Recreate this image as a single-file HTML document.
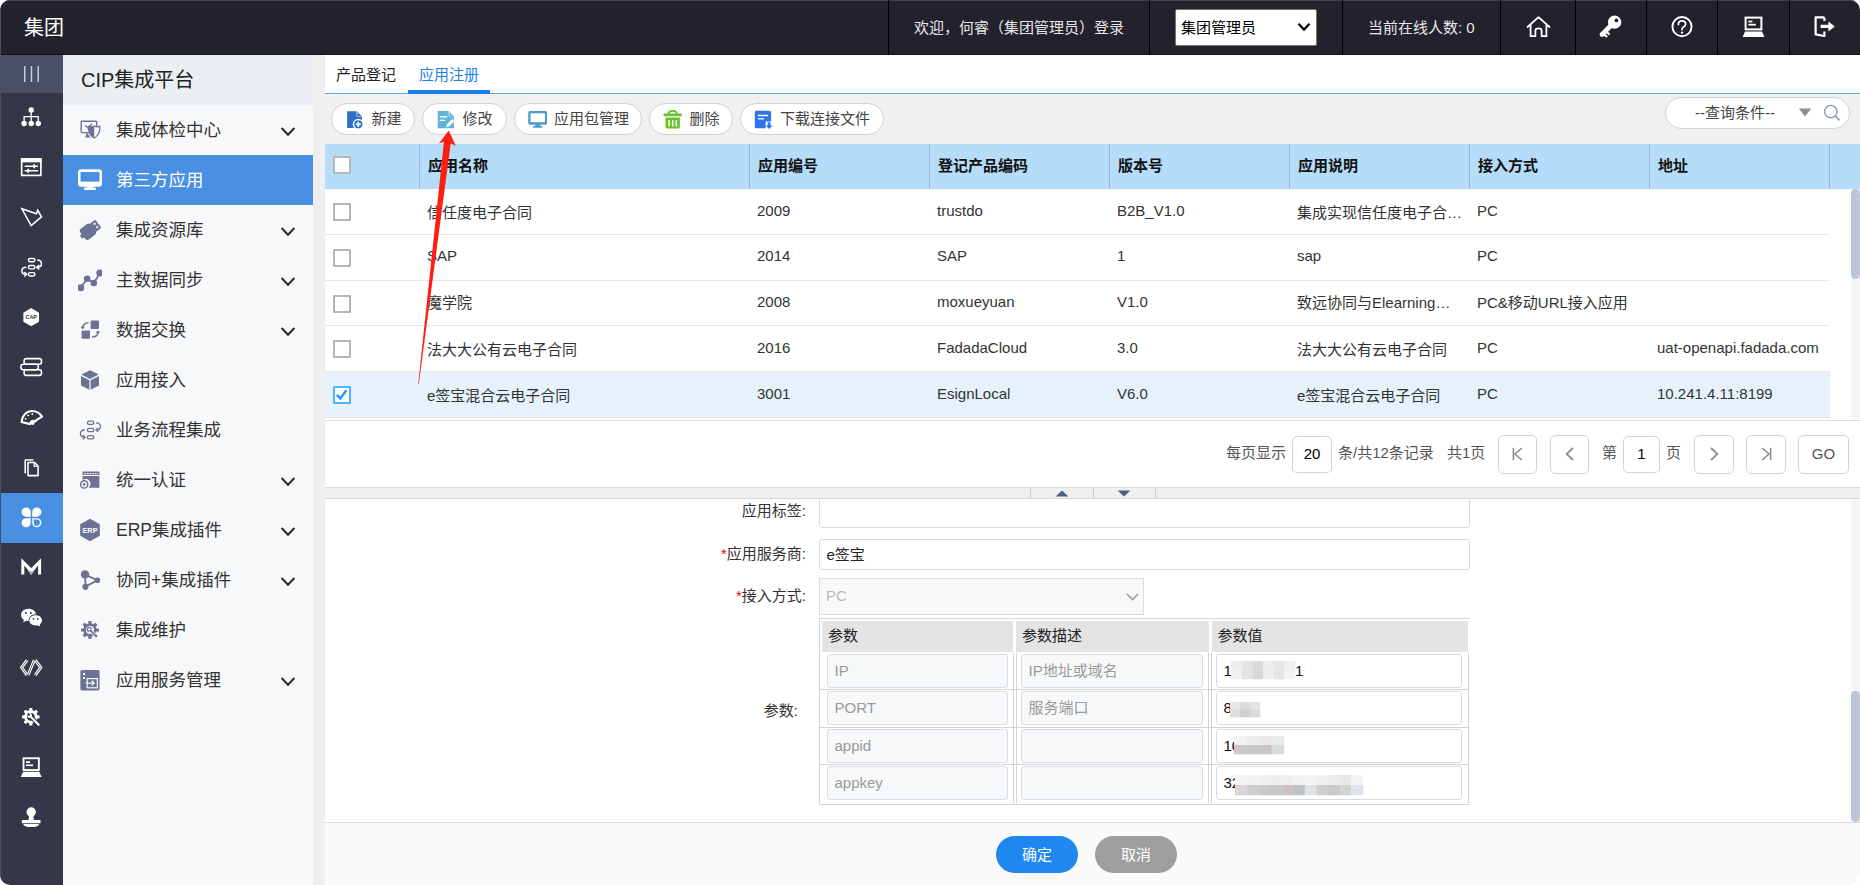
<!DOCTYPE html>
<html lang="zh-CN">
<head>
<meta charset="utf-8">
<title>CIP集成平台</title>
<style>
*{box-sizing:border-box;margin:0;padding:0}
html,body{width:1860px;height:885px;overflow:hidden;background:#fff}
body{font-family:"Liberation Sans","Noto Sans CJK SC",sans-serif;font-size:15px;color:#333;position:relative}
.abs{position:absolute}
#win{position:absolute;left:0;top:0;width:1860px;height:885px;border-radius:10px;overflow:hidden;background:#fff}
/* top bar */
#top{position:absolute;left:0;top:0;width:1860px;height:55px;background:#23212c;box-shadow:inset 0 1px 0 #44444f, inset 0 -1px 0 #14121d;color:#fff}
#top .logo{position:absolute;left:24px;top:14px;font-size:20px;line-height:28px;color:#fff}
#top .sep{position:absolute;top:0;width:1px;height:55px;background:#000}
#top .txt{position:absolute;top:0;height:55px;line-height:55px;font-size:15px;color:#e8e8ea;white-space:nowrap}
#top .sel{position:absolute;left:1175px;top:9px;width:142px;height:37px;background:#fff;border:1px solid #767676;border-radius:2px;color:#000;font-size:15px;line-height:35px;padding-left:5px}
#top svg.ic{position:absolute}
/* icon strip */
#strip{position:absolute;left:0;top:55px;width:63px;height:830px;background:#343747}
#strip .ham{position:absolute;left:0;top:0;width:63px;height:38px;background:#4a4f66}
#strip .cur{position:absolute;left:0;top:438px;width:63px;height:50px;background:#4a90e2}
#strip svg{position:absolute;left:20.4px;width:22.4px;height:22.4px}
/* menu */
#menu{position:absolute;left:63px;top:55px;width:250px;height:830px;background:#f7f8fa}
#menu .hd{height:50px;background:#ebeef3;font-size:20px;line-height:50px;padding-left:18px;color:#222}
#menu .it{position:relative;height:50px;line-height:50px;font-size:17.5px;color:#333;padding-left:53px;white-space:nowrap}
#menu .it.on{background:#4a90e2;color:#fff}
#menu .it svg.mi{position:absolute;left:15px;top:13px;width:24px;height:24px}
#menu .it svg.ch{position:absolute;left:216.500px;top:20.500px;width:16px;height:12px}
#gap{position:absolute;left:313px;top:55px;width:12px;height:830px;background:#efefef}
/* main */
#main{position:absolute;left:325px;top:55px;width:1535px;height:830px;background:#fff}
#tabs{position:absolute;left:0;top:0;width:1535px;height:39px;border-bottom:1px solid #5aa8f2}
#tabs span{position:absolute;top:10px;font-size:15px;line-height:20px;color:#222}
#tabs .on{color:#1f7fe8}
#tabs .ul{position:absolute;left:83px;top:35px;width:82px;height:4px;background:#1b7ee6}
#tool{position:absolute;left:0;top:39px;width:1535px;height:50px;background:#f0f0f0}
.btn{position:absolute;top:9px;height:32px;border:1px solid #d2d2d2;border-radius:16px;background:#fff;font-size:15px;line-height:30px;color:#444;white-space:nowrap;padding-left:39.6px}
.btn svg{position:absolute;left:13.3px;top:5.5px;width:19px;height:19px}
#q{position:absolute;left:1340px;top:3px;width:184.500px;height:32px;border:1px solid #d2d2d2;border-radius:16px;background:#fff;font-size:15px;line-height:30px;color:#444}
/* table */
#th{position:absolute;left:0;top:89px;width:1535px;height:45px;background:#b5dcf8}
#th .c{position:absolute;top:0;height:45px;line-height:43px;font-weight:bold;color:#111;font-size:15px;padding-left:8px;border-left:1px solid #9db1da}
.row{position:absolute;left:0;width:1505px;height:46px;border-bottom:1px solid #e8e8e8;background:#fff}
.row.sel{background:#e6f1fc}
.row span{position:absolute;top:0;height:43px;line-height:43px;font-size:15px;color:#333;white-space:nowrap}
.row span.z{top:1.5px}
.row.u span{top:-1.2px}
.row.u span.z{top:0.3px}
.cb{position:absolute;left:8px;width:18px;height:18px;border:2px solid #b6b6b6;border-radius:1px;background:#fff}
/* pager */
#pg{position:absolute;left:0;top:365px;width:1535px;height:67px;border-top:1px solid #ddd;background:#fff}
#pg .t{position:absolute;top:0;line-height:64px;font-size:15px;color:#555;white-space:nowrap}
#pg .b{position:absolute;border:1px solid #d4d4d4;border-radius:5px;background:#fff;text-align:center;color:#333}
#split{position:absolute;left:0;top:432px;width:1535px;height:12px;background:#f0f0f0;border-top:1px solid #d8d8d8;border-bottom:1px solid #d8d8d8}
/* form */
#form{position:absolute;left:0;top:444px;width:1535px;height:324px;background:#fff;overflow:hidden}
.lab{position:absolute;width:480px;text-align:right;font-size:15px;line-height:20px;color:#333;white-space:nowrap}
.lab i{color:#f00;font-style:normal}
.inp{position:absolute;border:1px solid #d7dbe3;border-radius:3px;background:#fff;font-size:15px;color:#222;padding-left:6.500px}
.dis{background:#f7f8fa;color:#9a9a9a}
#foot{position:absolute;left:0;top:767px;width:1535px;height:63px;background:#fafafa;border-top:1px solid #dcdcdc}
#foot .ok,#foot .no{position:absolute;top:13px;width:82px;height:37px;border-radius:19px;color:#fff;font-size:15px;line-height:37px;text-align:center}
#foot .ok{left:671px;background:#1f88f0}
#foot .no{left:770px;background:#9e9e9e}
</style>
</head>
<body>
<div id="win">
<!--TOP-->
<div id="top">
<div class="logo">集团</div>
<div class="sep" style="left:888px"></div><div class="sep" style="left:1149px"></div><div class="sep" style="left:1342px"></div><div class="sep" style="left:1500px"></div><div class="sep" style="left:1575px"></div><div class="sep" style="left:1646px"></div><div class="sep" style="left:1717px"></div><div class="sep" style="left:1789px"></div>
<div class="txt" style="left:914px">欢迎，何睿（集团管理员）登录</div>
<div class="sel">集团管理员<svg class="ic" style="left:121px;top:12px" width="14" height="10" viewBox="0 0 14 10"><path d="M1.5 1.8 L7 7.6 L12.5 1.8" fill="none" stroke="#000" stroke-width="2.2"/></svg></div>
<div class="txt" style="left:1368px">当前在线人数: 0</div>
<svg class="ic" style="left:1526px;top:15px" width="25" height="24" viewBox="0 0 25 24"><path d="M1.5 12 L12.5 2.2 L23.5 12 M4.6 10 V21.2 H9.4 V15.6 Q9.4 13.4 12.5 13.4 Q15.6 13.4 15.6 15.6 V21.2 H20.4 V10" fill="none" stroke="#fff" stroke-width="1.800" stroke-linejoin="round" stroke-linecap="round"/></svg>
<svg class="ic" style="left:1599px;top:14px" width="24" height="24" viewBox="0 0 24 24"><path d="M3 20.5 L12 11.5" stroke="#fff" stroke-width="4.6" stroke-linecap="round"/><path d="M5.5 20.8 l2 1.6 M8.3 18.6 l1.6 1.4" stroke="#fff" stroke-width="2.2" stroke-linecap="round"/><circle cx="15.6" cy="8.2" r="6.6" fill="#fff"/><circle cx="17.4" cy="6.4" r="1.9" fill="#23212c"/></svg>
<svg class="ic" style="left:1670px;top:15px" width="24" height="24" viewBox="0 0 24 24"><circle cx="12" cy="11.6" r="9.6" fill="none" stroke="#fff" stroke-width="1.9"/><path d="M8.4 9.4 Q8.4 5.8 12 5.8 Q15.6 5.8 15.6 9 Q15.6 10.8 13.6 12 Q12 13 12 14.6" fill="none" stroke="#fff" stroke-width="1.8" stroke-linecap="round"/><circle cx="12" cy="17.6" r="1.2" fill="#fff"/></svg>
<svg class="ic" style="left:1741px;top:14.500px" width="25" height="24" viewBox="0 0 25 24"><rect x="4.6" y="2.6" width="15.8" height="11.8" fill="none" stroke="#fff" stroke-width="2"/><rect x="7.4" y="5.6" width="4" height="1.8" fill="#fff"/><rect x="7.4" y="8.8" width="7.4" height="1.8" fill="#fff"/><path d="M4 16.6 H21 L23.4 22 H1.6 Z" fill="#fff"/></svg>
<svg class="ic" style="left:1813px;top:14px" width="24" height="24" viewBox="0 0 24 24"><path d="M11.4 3.4 H2.6 V20.4 L11.4 22 V17.6" fill="none" stroke="#fff" stroke-width="2.2" stroke-linejoin="round"/><path d="M11.4 3.4 V7" fill="none" stroke="#fff" stroke-width="2.2"/><path d="M7.600 10.800 H15.400 V7.400 L21.800 12.400 L15.400 17.400 V14 H7.600 Z" fill="#fff"/></svg>
</div>
<!--STRIP-->
<div id="strip"><div class="ham"><svg style="left:23px;top:11px;width:17px;height:16px" viewBox="0 0 17 16"><path d="M1.800 0 V16 M8.500 0 V16 M15.200 0 V16" stroke="#cfd3e0" stroke-width="1.400"/></svg></div><div class="cur"></div>
<svg style="top:51px" viewBox="0 0 24 24"><circle cx="12" cy="4.200" r="2.900" fill="#fff"/><path d="M12 5 V17 M4.400 17 V11.400 H19.600 V17" fill="none" stroke="#fff" stroke-width="1.400"/><circle cx="4.400" cy="18.800" r="2.900" fill="#fff"/><circle cx="12" cy="18.800" r="2.900" fill="#fff"/><circle cx="19.600" cy="18.800" r="2.900" fill="#fff"/></svg>
<svg style="top:101px" viewBox="0 0 24 24"><rect x="1.8" y="3.2" width="20.6" height="17.6" fill="none" stroke="#fff" stroke-width="1.8"/><rect x="1" y="2.4" width="22.2" height="4.4" fill="#fff"/><path d="M5 11 H19.4 M5 15.8 H19.4" stroke="#fff" stroke-width="1.5"/><path d="M15.2 8.8 V13.2 M8.8 13.6 V18" stroke="#fff" stroke-width="2"/></svg>
<svg style="top:151px" viewBox="0 0 24 24"><path d="M2 3 L17.6 8.4 L19 4.6 L23 11.6 L12 21 Z" fill="none" stroke="#fff" stroke-width="1.7" stroke-linejoin="miter"/></svg>
<svg style="top:201px" viewBox="0 0 24 24"><rect x="9" y="2.6" width="7" height="3.6" rx="1.8" fill="none" stroke="#fff" stroke-width="1.5"/><rect x="9" y="10.2" width="7" height="3.6" rx="1.8" fill="none" stroke="#fff" stroke-width="1.5"/><rect x="9" y="17.8" width="7" height="3.6" rx="1.8" fill="none" stroke="#fff" stroke-width="1.5"/><path d="M18.4 4.4 Q23 4.6 23 8.2 Q23 12 18.6 12" fill="none" stroke="#fff" stroke-width="1.6"/><path d="M20.6 9.6 L18 12 L20.6 14.4" fill="none" stroke="#fff" stroke-width="1.6"/><path d="M6.8 12 Q2 12.2 2 15.8 Q2 19.6 6.4 19.6" fill="none" stroke="#fff" stroke-width="1.6"/><path d="M4.6 17.2 L7.2 19.6 L4.6 22" fill="none" stroke="#fff" stroke-width="1.6"/></svg>
<svg style="top:251px" viewBox="0 0 24 24"><path d="M12 3.200 L19.600 7.600 V16.400 L12 20.800 L4.400 16.400 V7.600 Z" fill="#fff" stroke="#fff" stroke-width="1.600" stroke-linejoin="round"/><text x="12" y="14.100" text-anchor="middle" font-family="Liberation Sans, sans-serif" font-weight="bold" font-size="5.800" fill="#343747">CAP</text></svg>
<svg style="top:301px" viewBox="0 0 24 24"><rect x="4.400" y="2.800" width="18.600" height="6" rx="2.400" fill="none" stroke="#fff" stroke-width="1.700"/><rect x="1" y="8.800" width="18.600" height="6" rx="2.400" fill="none" stroke="#fff" stroke-width="1.700"/><rect x="4.400" y="14.800" width="18.600" height="6" rx="2.400" fill="none" stroke="#fff" stroke-width="1.700"/></svg>
<svg style="top:351px" viewBox="0 0 24 24"><path d="M1.6 17.2 Q3 6.4 12 5.4 Q19.6 5 23.6 11.4 L15.4 16.4 Q13.4 15 11.6 17.2 L11 19.4 Z" fill="none" stroke="#fff" stroke-width="2.300" stroke-linejoin="round"/><circle cx="6" cy="13.8" r="1" fill="#fff"/><circle cx="8.8" cy="10" r="1" fill="#fff"/><circle cx="13.2" cy="8.6" r="1" fill="#fff"/><circle cx="13.6" cy="18.6" r="1.7" fill="#fff"/><path d="M13.6 18.6 L18.4 15.2" stroke="#fff" stroke-width="1.5"/></svg>
<svg style="top:401px" viewBox="0 0 24 24"><path d="M8.600 7 H15.600 L19.400 10.800 V21 H8.600 Z" fill="none" stroke="#fff" stroke-width="1.700" stroke-linejoin="round"/><path d="M15.200 7.200 V11.200 H19.200" fill="none" stroke="#fff" stroke-width="1.400"/><path d="M5.600 18.400 V4.200 H14.400" fill="none" stroke="#fff" stroke-width="1.700" stroke-linejoin="round"/></svg>
<svg style="top:451px" viewBox="0 0 24 24"><path d="M6.6 1.6 A4.9 4.9 0 0 1 11.5 6.5 V11.4 H6.6 A4.9 4.9 0 0 1 6.6 1.6 Z" fill="#fff"/><path d="M18 1.6 A4.9 4.9 0 0 1 18 11.4 H13.1 V6.5 A4.9 4.9 0 0 1 18 1.6 Z" fill="#fff"/><path d="M6.6 13 H11.5 V17.9 A4.9 4.9 0 1 1 6.6 13 Z" fill="#fff"/><path d="M13.9 13.8 H18 A4.1 4.1 0 1 1 13.9 17.9 Z" fill="none" stroke="#fff" stroke-width="1.6"/></svg>
<svg style="top:501px" viewBox="0 0 24 24"><path d="M3 19.800 V6.400 L12 15.400 L21 6.400 V19.800" fill="none" stroke="#fff" stroke-width="3.200" stroke-linejoin="miter"/><path d="M3 6.400 L12 19.600 L21 6.400" fill="none" stroke="#fff" stroke-width="1"/></svg>
<svg style="top:551px" viewBox="0 0 24 24"><path d="M9.2 3 C4.4 3 1.2 6 1.2 9.6 C1.2 11.8 2.4 13.6 4.2 14.8 L3.4 17.6 L6.6 15.8 C7.4 16 8.2 16.2 9.2 16.2 C9.2 11 13 8.6 17.2 8.8 C16.6 5.400 13.400 3 9.2 3 Z" fill="#fff"/><path d="M16.800 9.8 C12.800 9.8 10 12.200 10 15.400 C10 18.600 12.800 21 16.800 21 C17.600 21 18.400 20.900 19.100 20.700 L21.800 22.200 L21.100 19.800 C22.700 18.700 23.600 17.200 23.600 15.400 C23.600 12.200 20.800 9.8 16.800 9.800 Z" fill="#fff"/><circle cx="6.400" cy="7.400" r="1.1" fill="#343747"/><circle cx="11.600" cy="7.400" r="1.1" fill="#343747"/><circle cx="14.400" cy="13.800" r="1" fill="#343747"/><circle cx="19" cy="13.800" r="1" fill="#343747"/></svg>
<svg style="top:601px" viewBox="0 0 24 24"><path d="M7.600 4.400 L1.800 12.400 L7.600 20.400 M16.400 4.400 L22.200 12.400 L16.400 20.400" fill="none" stroke="#fff" stroke-width="3.200" stroke-linejoin="miter"/><path d="M15.400 4.400 L8.600 20.400" fill="none" stroke="#fff" stroke-width="3.200"/><path d="M7.600 4.400 L1.800 12.400 L7.600 20.400 M16.400 4.400 L22.200 12.400 L16.400 20.400 M15.400 4.400 L8.600 20.400" fill="none" stroke="#343747" stroke-width="0.800"/></svg>
<svg style="top:651px" viewBox="0 0 24 24"><g transform="translate(11.600 11.600)"><rect x="-1.700" y="-9.400" width="3.400" height="4.600" rx="0.700" fill="#fff" transform="rotate(0)"/><rect x="-1.700" y="-9.400" width="3.400" height="4.600" rx="0.700" fill="#fff" transform="rotate(45)"/><rect x="-1.700" y="-9.400" width="3.400" height="4.600" rx="0.700" fill="#fff" transform="rotate(90)"/><rect x="-1.700" y="-9.400" width="3.400" height="4.600" rx="0.700" fill="#fff" transform="rotate(135)"/><rect x="-1.700" y="-9.400" width="3.400" height="4.600" rx="0.700" fill="#fff" transform="rotate(180)"/><rect x="-1.700" y="-9.400" width="3.400" height="4.600" rx="0.700" fill="#fff" transform="rotate(225)"/><rect x="-1.700" y="-9.400" width="3.400" height="4.600" rx="0.700" fill="#fff" transform="rotate(270)"/><rect x="-1.700" y="-9.400" width="3.400" height="4.600" rx="0.700" fill="#fff" transform="rotate(315)"/><circle r="5.700" fill="none" stroke="#fff" stroke-width="3"/></g><path d="M10 10 L19 19" stroke="#343747" stroke-width="4.400"/><path d="M11 11 L20 20" stroke="#fff" stroke-width="2.200" stroke-linecap="round"/><circle cx="10.200" cy="10.200" r="2.600" fill="#fff"/><circle cx="9.200" cy="9.200" r="1.400" fill="#343747"/></svg>
<svg style="top:701px" viewBox="0 0 24 24"><rect x="3.800" y="2.400" width="16.400" height="12.600" fill="none" stroke="#fff" stroke-width="2"/><rect x="6.400" y="5.600" width="4.400" height="1.900" fill="#fff"/><rect x="6.400" y="9" width="7.600" height="1.900" fill="#fff"/><path d="M3.400 17 H20.600 L23.200 22.400 H0.800 Z" fill="#fff"/></svg>
<svg style="top:751px" viewBox="0 0 24 24"><circle cx="12" cy="6.400" r="5" fill="#fff"/><path d="M9.800 10 H14.200 L15 15.400 H9 Z" fill="#fff"/><path d="M2 15 H22 V18.400 H2 Z" fill="#fff"/><path d="M3.400 19.400 H20.600 Q19.400 22.400 15.800 22.400 H8.200 Q4.600 22.400 3.400 19.400 Z" fill="#fff"/></svg></div>
<!--MENU-->
<div id="menu">
<div class="hd">CIP集成平台</div>
<div class="it"><svg class="mi" viewBox="0 0 24 24"><rect x="3.200" y="3.200" width="15.600" height="11.400" rx="1" fill="none" stroke="#6d7292" stroke-width="1.400"/><path d="M8.600 14.600 L7.400 19.400 H12.600" fill="#6d7292"/><path d="M7.200 7.200 L10 10 L14 5.600" fill="none" stroke="#6d7292" stroke-width="1.300"/><path d="M16.200 8 C18 9 20 9 21.800 8.400 C22.200 14 20.200 17.800 16.200 20 C12.200 17.800 10.200 14 10.600 8.400 C12.400 9 14.400 9 16.200 8 Z" fill="#f7f8fa" stroke="#6d7292" stroke-width="1.300"/><path d="M16.200 8 C14.400 9 12.400 9 10.600 8.400 C10.200 14 12.200 17.800 16.200 20 Z" fill="#6d7292"/></svg>集成体检中心<svg class="ch" viewBox="0 0 16 12"><path d="M1.600 2 L8 8.800 L14.400 2" fill="none" stroke="#2b2b2b" stroke-width="2"/></svg></div>
<div class="it on"><svg class="mi" viewBox="0 0 24 24"><rect x="1.2" y="2.6" width="21.6" height="14.8" rx="2" fill="none" stroke="#fff" stroke-width="2.6"/><rect x="2" y="13.600" width="20" height="3.600" fill="#fff"/><path d="M9.400 17 H14.600 L15.200 20 H8.800 Z" fill="#fff"/><rect x="6" y="19.600" width="12" height="2.400" rx="1.200" fill="#fff"/></svg>第三方应用</div>
<div class="it"><svg class="mi" viewBox="0 0 24 24"><g transform="rotate(-38 12 12)"><rect x="2.800" y="5.400" width="13" height="13.400" rx="3" fill="#6d7292"/><rect x="15" y="7" width="7.400" height="10.200" rx="0.800" fill="#6d7292"/><rect x="18.400" y="9" width="2" height="2" fill="#f7f8fa"/><rect x="18.400" y="13.200" width="2" height="2" fill="#f7f8fa"/><rect x="0.600" y="10" width="3.200" height="4.200" fill="#6d7292"/></g></svg>集成资源库<svg class="ch" viewBox="0 0 16 12"><path d="M1.600 2 L8 8.800 L14.400 2" fill="none" stroke="#2b2b2b" stroke-width="2"/></svg></div>
<div class="it"><svg class="mi" viewBox="0 0 24 24"><path d="M2.400 20 L9.200 10.800 L15.800 15 L22 5" fill="none" stroke="#6d7292" stroke-width="1.800"/><circle cx="2.800" cy="19.800" r="3.500" fill="#6d7292"/><circle cx="9.200" cy="10.800" r="3.300" fill="#6d7292"/><circle cx="15.800" cy="15" r="3.300" fill="#6d7292"/><circle cx="21.800" cy="5" r="3.500" fill="#6d7292"/></svg>主数据同步<svg class="ch" viewBox="0 0 16 12"><path d="M1.600 2 L8 8.800 L14.400 2" fill="none" stroke="#2b2b2b" stroke-width="2"/></svg></div>
<div class="it"><svg class="mi" viewBox="0 0 24 24"><rect x="12.600" y="2.600" width="8.400" height="8.400" rx="1.200" fill="#6d7292"/><rect x="3.600" y="12.400" width="8.400" height="8.400" rx="1.200" fill="#6d7292"/><path d="M4.600 10.400 Q4.600 5 10.600 4.800" fill="none" stroke="#6d7292" stroke-width="1.600"/><path d="M2.400 8.800 L4.600 11.200 L7 8.800 Z" fill="#6d7292"/><path d="M20 13.400 Q20 18.800 14 19" fill="none" stroke="#6d7292" stroke-width="1.600"/><path d="M17.600 15 L20 12.600 L22.200 15 Z" fill="#6d7292"/></svg>数据交换<svg class="ch" viewBox="0 0 16 12"><path d="M1.600 2 L8 8.800 L14.400 2" fill="none" stroke="#2b2b2b" stroke-width="2"/></svg></div>
<div class="it"><svg class="mi" viewBox="0 0 24 24"><path d="M12 2.200 L20.600 6.600 L12 11 L3.400 6.600 Z" fill="#6d7292"/><path d="M3 8 L11.400 12.200 V21.800 L3 17.400 Z" fill="#6d7292"/><path d="M21 8 L12.600 12.200 V21.800 L21 17.400 Z" fill="#6d7292"/></svg>应用接入</div>
<div class="it"><svg class="mi" viewBox="0 0 24 24"><rect x="9.400" y="3.200" width="6.400" height="3.200" rx="1.600" fill="none" stroke="#6d7292" stroke-width="1.300"/><rect x="9.400" y="10.400" width="6.400" height="3.200" rx="1.600" fill="none" stroke="#6d7292" stroke-width="1.300"/><rect x="9.400" y="17.600" width="6.400" height="3.200" rx="1.600" fill="none" stroke="#6d7292" stroke-width="1.300"/><path d="M18 4.800 Q22.400 5 22.400 8.400 Q22.400 12 18.400 12" fill="none" stroke="#6d7292" stroke-width="1.300"/><path d="M20.200 10 L18 12 L20.200 14" fill="none" stroke="#6d7292" stroke-width="1.300"/><path d="M7 12 Q2.400 12.200 2.400 15.600 Q2.400 19.200 6.600 19.200" fill="none" stroke="#6d7292" stroke-width="1.300"/><path d="M4.800 17.200 L7 19.200 L4.800 21.200" fill="none" stroke="#6d7292" stroke-width="1.300"/></svg>业务流程集成</div>
<div class="it"><svg class="mi" viewBox="0 0 24 24"><path d="M4.600 3.600 H21.400 V19.800 H10.600 A4.800 4.800 0 0 0 4.600 12 Z" fill="#6d7292"/><path d="M6.400 5.600 H20" stroke="#f7f8fa" stroke-width="1.200" stroke-dasharray="1.600 1"/><rect x="4.600" y="7" width="16.800" height="1" fill="#f7f8fa"/><circle cx="6.200" cy="16.400" r="3.600" fill="none" stroke="#6d7292" stroke-width="1.500"/><circle cx="6.200" cy="16.400" r="1.300" fill="#6d7292"/></svg>统一认证<svg class="ch" viewBox="0 0 16 12"><path d="M1.600 2 L8 8.800 L14.400 2" fill="none" stroke="#2b2b2b" stroke-width="2"/></svg></div>
<div class="it"><svg class="mi" viewBox="0 0 24 24"><path d="M12 1.600 L21 6.600 V17.400 L12 22.400 L3 17.400 V6.600 Z" fill="#6d7292" stroke="#6d7292" stroke-width="1.600" stroke-linejoin="round"/><text x="12" y="14.700" text-anchor="middle" font-family="Liberation Sans, sans-serif" font-weight="bold" font-size="7.400" fill="#fff">ERP</text></svg>ERP集成插件<svg class="ch" viewBox="0 0 16 12"><path d="M1.600 2 L8 8.800 L14.400 2" fill="none" stroke="#2b2b2b" stroke-width="2"/></svg></div>
<div class="it"><svg class="mi" viewBox="0 0 24 24"><path d="M7 6.600 L19.400 12.200 L7.600 18.600 Z" fill="none" stroke="#6d7292" stroke-width="1.800"/><circle cx="7" cy="6.400" r="4.200" fill="#6d7292"/><circle cx="19.400" cy="12.200" r="2.800" fill="#6d7292"/><circle cx="7.400" cy="18.800" r="3.100" fill="#6d7292"/></svg>协同+集成插件<svg class="ch" viewBox="0 0 16 12"><path d="M1.600 2 L8 8.800 L14.400 2" fill="none" stroke="#2b2b2b" stroke-width="2"/></svg></div>
<div class="it"><svg class="mi" viewBox="0 0 24 24"><g transform="translate(12 12)"><rect x="-1.600" y="-9" width="3.200" height="4.400" rx="0.600" fill="#6d7292" transform="rotate(0)"/><rect x="-1.600" y="-9" width="3.200" height="4.400" rx="0.600" fill="#6d7292" transform="rotate(45)"/><rect x="-1.600" y="-9" width="3.200" height="4.400" rx="0.600" fill="#6d7292" transform="rotate(90)"/><rect x="-1.600" y="-9" width="3.200" height="4.400" rx="0.600" fill="#6d7292" transform="rotate(135)"/><rect x="-1.600" y="-9" width="3.200" height="4.400" rx="0.600" fill="#6d7292" transform="rotate(180)"/><rect x="-1.600" y="-9" width="3.200" height="4.400" rx="0.600" fill="#6d7292" transform="rotate(225)"/><rect x="-1.600" y="-9" width="3.200" height="4.400" rx="0.600" fill="#6d7292" transform="rotate(270)"/><rect x="-1.600" y="-9" width="3.200" height="4.400" rx="0.600" fill="#6d7292" transform="rotate(315)"/><circle r="5.400" fill="none" stroke="#6d7292" stroke-width="2.600"/><circle cx="-0.800" cy="-0.800" r="1.900" fill="none" stroke="#6d7292" stroke-width="1.300"/><path d="M0.600 0.600 L5.800 5.800" stroke="#f7f8fa" stroke-width="3.600"/><path d="M0.600 0.600 L6.400 6.400" stroke="#6d7292" stroke-width="1.800" stroke-linecap="round"/></g></svg>集成维护</div>
<div class="it"><svg class="mi" viewBox="0 0 24 24"><rect x="2.400" y="2" width="19.200" height="20.400" rx="1.600" fill="#6d7292"/><rect x="5" y="5" width="2" height="2" fill="#f7f8fa"/><rect x="5" y="9" width="2" height="2" fill="#f7f8fa"/><rect x="9.200" y="10.600" width="10.200" height="9.200" fill="none" stroke="#f7f8fa" stroke-width="1.200"/><path d="M7.600 15.200 H16 M13.600 12.800 L16.200 15.200 L13.600 17.600" fill="none" stroke="#f7f8fa" stroke-width="1.200"/></svg>应用服务管理<svg class="ch" viewBox="0 0 16 12"><path d="M1.600 2 L8 8.800 L14.400 2" fill="none" stroke="#2b2b2b" stroke-width="2"/></svg></div>
</div>
<div id="gap"></div><div class="abs" style="left:0;top:10px;width:1px;height:865px;background:#4b4f61"></div>
<!--MAIN-->
<div id="main">
<div id="tabs"><span class="z" style="left:11px">产品登记</span><span class="on" style="left:94px">应用注册</span><div class="ul"></div></div>
<div id="tool"><div class="btn" style="left:6px;width:84px"><svg viewBox="0 0 18 18"><path d="M2 1.200 H11 L16 6.200 V17 H2 Z" fill="#2f6fc4"/><path d="M11 1.200 V6.200 H16 Z" fill="#fff"/><path d="M11.600 1.800 L15.600 5.800 H11.600 Z" fill="#2f6fc4"/><circle cx="12.600" cy="13.600" r="4.600" fill="#2f6fc4" stroke="#fff" stroke-width="1.400"/><path d="M12.600 11.200 V16 M10.200 13.600 H15" stroke="#fff" stroke-width="1.500"/></svg>新建</div><div class="btn" style="left:97px;width:84.5px"><svg viewBox="0 0 18 18"><path d="M1.600 1 H12 L17 6 V17.400 H1.600 Z" fill="#5fb4d8"/><path d="M12 1 V6 H17 Z" fill="#fff"/><path d="M12.600 1.800 L16.400 5.600 H12.600 Z" fill="#5fb4d8"/><path d="M3.400 6.400 H10.600 M3.400 9.800 H8.600" stroke="#fff" stroke-width="1.300"/><path d="M9.600 16.400 L10.400 13.600 L15.400 8.600 L17.400 10.600 L12.400 15.600 Z" fill="#fff"/></svg>修改</div><div class="btn" style="left:188.5px;width:128px"><svg viewBox="0 0 18 18"><rect x="1.300" y="2" width="15.800" height="10.800" rx="0.800" fill="none" stroke="#4a9cc4" stroke-width="2.200"/><path d="M7.200 13.600 H11.200 L11.800 15.600 H6.600 Z" fill="#4a9cc4"/><rect x="4.800" y="15.200" width="8.800" height="1.600" fill="#4a9cc4"/></svg>应用包管理</div><div class="btn" style="left:324px;width:84px"><svg viewBox="0 0 18 18"><rect x="0.600" y="3.400" width="17.200" height="2.600" rx="0.600" fill="#6cc02a"/><path d="M5.400 3.600 Q5.400 0.800 9.200 0.800 Q13 0.800 13 3.600" fill="none" stroke="#6cc02a" stroke-width="1.800"/><path d="M2.400 7.200 H16 V16.200 Q16 17.600 14.600 17.600 H3.800 Q2.400 17.600 2.400 16.200 Z" fill="#6cc02a"/><path d="M5.800 9.400 V15.600 M9.200 9.400 V15.600 M12.600 9.400 V15.600" stroke="#fff" stroke-width="1.500"/></svg>删除</div><div class="btn" style="left:414.5px;width:144.5px"><svg viewBox="0 0 18 18"><path d="M2.200 0.800 H14.400 Q16.200 0.800 16.200 2.600 V11 H11 V17.400 H2.200 Q0.800 17.400 0.800 16 V2.200 Q0.800 0.800 2.200 0.800 Z" fill="#2f72ea"/><path d="M3.600 5.200 H13.400 M3.600 8.400 H9.600" stroke="#fff" stroke-width="1.400"/><path d="M13 11.600 H15.600 V14.600 H17.600 L14.300 18 L11 14.600 H13 Z" fill="#2f72ea"/></svg>下载连接文件</div><div id="q"><span style="position:absolute;left:29px;top:0">--查询条件--</span><svg style="position:absolute;left:132px;top:10px" width="14" height="9" viewBox="0 0 14 9"><path d="M0.800 0.600 H13.200 L7 8.400 Z" fill="#8a8e98"/></svg><svg style="position:absolute;left:157px;top:6px" width="18" height="18" viewBox="0 0 18 18"><circle cx="7.800" cy="7.600" r="6.200" fill="none" stroke="#8c98aa" stroke-width="1.400"/><path d="M12.200 12 L16.600 16.400" stroke="#8c98aa" stroke-width="1.600"/></svg></div></div>
<div id="th"><div class="cb" style="top:12px"></div><div class="c" style="left:94px;width:330px">应用名称</div><div class="c" style="left:424px;width:180px">应用编号</div><div class="c" style="left:604px;width:180px">登记产品编码</div><div class="c" style="left:784px;width:180px">版本号</div><div class="c" style="left:964px;width:180px">应用说明</div><div class="c" style="left:1144px;width:180px">接入方式</div><div class="c" style="left:1324px;width:180px">地址</div><div class="c" style="left:1504px;width:31px"></div></div>
<div class="row" style="top:134px;height:46px"><div class="cb" style="top:14px"></div><span class="z" style="left:102px">信任度电子合同</span><span style="left:432px">2009</span><span style="left:612px">trustdo</span><span style="left:792px">B2B_V1.0</span><span class="z" style="left:972px">集成实现信任度电子合…</span><span style="left:1152px">PC</span></div>
<div class="row u" style="top:180px;height:46px"><div class="cb" style="top:14px"></div><span style="left:102px">SAP</span><span style="left:432px">2014</span><span style="left:612px">SAP</span><span style="left:792px">1</span><span style="left:972px">sap</span><span style="left:1152px">PC</span></div>
<div class="row u" style="top:226px;height:45px"><div class="cb" style="top:14px"></div><span class="z" style="left:102px">魔学院</span><span style="left:432px">2008</span><span style="left:612px">moxueyuan</span><span style="left:792px">V1.0</span><span class="z" style="left:972px">致远协同与Elearning…</span><span class="z" style="left:1152px">PC&amp;移动URL接入应用</span></div>
<div class="row" style="top:271px;height:46px"><div class="cb" style="top:14px"></div><span class="z" style="left:102px">法大大公有云电子合同</span><span style="left:432px">2016</span><span style="left:612px">FadadaCloud</span><span style="left:792px">3.0</span><span class="z" style="left:972px">法大大公有云电子合同</span><span style="left:1152px">PC</span><span style="left:1332px">uat-openapi.fadada.com</span></div>
<div class="row sel" style="top:317px;height:46px"><div class="cb" style="top:14px;border-color:#4fb4ff"><svg style="position:absolute;left:0;top:0" width="14" height="14" viewBox="0 0 14 14"><path d="M1.800 6.800 L5.400 10.400 L11.400 2.200" fill="none" stroke="#1f97ff" stroke-width="2.400"/></svg></div><span class="z" style="left:102px">e签宝混合云电子合同</span><span style="left:432px">3001</span><span style="left:612px">EsignLocal</span><span style="left:792px">V6.0</span><span class="z" style="left:972px">e签宝混合云电子合同</span><span style="left:1152px">PC</span><span style="left:1332px">10.241.4.11:8199</span></div>
<div class="abs" style="left:1526px;top:134px;width:9px;height:230px;background:#f4f4f4;border-radius:0 0 5px 5px"></div><div class="abs" style="left:1526px;top:134px;width:9px;height:90px;background:#bcc6d8;border-radius:5px"></div>
<div id="pg"><span class="t" style="left:901px">每页显示</span><div class="b" style="left:967px;top:15px;width:40px;height:37px;line-height:33px;color:#000">20</div><span class="t" style="left:1013px">条/共12条记录</span><span class="t" style="left:1122px">共1页</span><div class="b" style="left:1173px;top:14px;width:39px;height:39px"><svg style="position:absolute;left:10.5px;top:10px" width="16" height="16" viewBox="0 0 16 16"><path d="M3.400 1.800 V14.200" stroke="#8e8e8e" stroke-width="1.600"/><path d="M11.800 2 L5 8 L11.800 14" fill="none" stroke="#8e8e8e" stroke-width="1.600"/></svg></div><div class="b" style="left:1225px;top:14px;width:39px;height:39px"><svg style="position:absolute;left:10.5px;top:10px" width="16" height="16" viewBox="0 0 16 16"><path d="M11 2 L4.600 8 L11 14" fill="none" stroke="#8e8e8e" stroke-width="1.800"/></svg></div><span class="t" style="left:1277px">第</span><div class="b" style="left:1298px;top:15px;width:37px;height:37px;line-height:33px;color:#000">1</div><span class="t" style="left:1341px">页</span><div class="b" style="left:1369px;top:14px;width:40px;height:39px"><svg style="position:absolute;left:11px;top:10px" width="16" height="16" viewBox="0 0 16 16"><path d="M5 2 L11.400 8 L5 14" fill="none" stroke="#8e8e8e" stroke-width="1.800"/></svg></div><div class="b" style="left:1421px;top:14px;width:40px;height:39px"><svg style="position:absolute;left:11px;top:10px" width="16" height="16" viewBox="0 0 16 16"><path d="M12.600 1.800 V14.200" stroke="#8e8e8e" stroke-width="1.600"/><path d="M4.200 2 L11 8 L4.200 14" fill="none" stroke="#8e8e8e" stroke-width="1.600"/></svg></div><div class="b" style="left:1473px;top:14px;width:51px;height:39px;line-height:36px;color:#555">GO</div></div>
<div id="split"><div class="abs" style="left:705px;top:0;width:1px;height:10px;background:#ccc"></div><div class="abs" style="left:768px;top:0;width:1px;height:10px;background:#ccc"></div><div class="abs" style="left:830px;top:0;width:1px;height:10px;background:#ccc"></div><svg class="abs" style="left:730px;top:1.500px" width="14" height="7" viewBox="0 0 14 7"><path d="M7 0.400 L13.400 6.600 H0.600 Z" fill="#4c5f82"/></svg><svg class="abs" style="left:792px;top:1.500px" width="14" height="7" viewBox="0 0 14 7"><path d="M7 6.600 L13.400 0.400 H0.600 Z" fill="#4c5f82"/></svg></div>
<div id="form"><div class="abs" style="left:0;top:-1px;width:1535px;height:326px"><div class="lab" style="left:1px;top:3px">应用标签:</div><div class="inp" style="left:494px;top:-4px;width:651px;height:34px"></div><div class="lab" style="left:1px;top:46px"><i>*</i>应用服务商:</div><div class="inp" style="left:494px;top:40.5px;width:651px;height:31px;line-height:29px">e签宝</div><div class="lab" style="left:1px;top:88px"><i>*</i>接入方式:</div><div class="inp dis" style="left:494px;top:80px;width:325px;height:37px;line-height:34px;border-radius:0;color:#b8b8b8;padding-left:6px;border-color:#dcdcdc;background:#f8f8f8">PC<svg style="position:absolute;left:306px;top:14px" width="13" height="8" viewBox="0 0 13 8"><path d="M1 1 L6.500 6.600 L12 1" fill="none" stroke="#9a9a9a" stroke-width="1.500"/></svg></div><div class="lab" style="left:-7px;top:203px">参数:</div><div class="abs" style="left:494px;top:120px;width:651px;height:187px;border:1px solid #d4d4d4;border-right:0;background:#fff"></div><div class="abs" style="left:497px;top:122.5px;width:191px;height:31px;background:#e4e4e4;line-height:29.5px;padding-left:6px;color:#222">参数</div><div class="abs" style="left:688px;top:155px;width:1px;height:150px;background:#d4d4d4"></div><div class="abs" style="left:691px;top:155px;width:1px;height:150px;background:#d4d4d4"></div><div class="abs" style="left:691px;top:122.5px;width:192.5px;height:31px;background:#e4e4e4;line-height:29.5px;padding-left:6px;color:#222">参数描述</div><div class="abs" style="left:883px;top:155px;width:1px;height:150px;background:#d4d4d4"></div><div class="abs" style="left:886px;top:155px;width:1px;height:150px;background:#d4d4d4"></div><div class="abs" style="left:886.5px;top:122.5px;width:256.5px;height:31px;background:#e4e4e4;line-height:29.5px;padding-left:6px;color:#222">参数值</div><div class="abs" style="left:1143px;top:155px;width:1px;height:150px;background:#d4d4d4"></div><div class="inp dis" style="left:502px;top:155.5px;width:181px;height:34px;line-height:32px">IP</div><div class="inp dis" style="left:696px;top:155.5px;width:182px;height:34px;line-height:32px">IP地址或域名</div><div class="inp" style="left:891px;top:155.5px;width:246px;height:34px;line-height:32px;color:#111">1<span style="position:absolute;left:78px">1</span></div><div class="abs" style="left:495px;top:191px;width:649px;height:1px;background:#d4d4d4"></div><div class="inp dis" style="left:502px;top:193px;width:181px;height:34px;line-height:32px">PORT</div><div class="inp dis" style="left:696px;top:193px;width:182px;height:34px;line-height:32px">服务端口</div><div class="inp" style="left:891px;top:193px;width:246px;height:34px;line-height:32px;color:#111">8</div><div class="abs" style="left:495px;top:228.5px;width:649px;height:1px;background:#d4d4d4"></div><div class="inp dis" style="left:502px;top:230.5px;width:181px;height:34px;line-height:32px">appid</div><div class="inp dis" style="left:696px;top:230.5px;width:182px;height:34px;line-height:32px"></div><div class="inp" style="left:891px;top:230.5px;width:246px;height:34px;line-height:32px;color:#111">10</div><div class="abs" style="left:495px;top:266px;width:649px;height:1px;background:#d4d4d4"></div><div class="inp dis" style="left:502px;top:268px;width:181px;height:34px;line-height:32px">appkey</div><div class="inp dis" style="left:696px;top:268px;width:182px;height:34px;line-height:32px"></div><div class="inp" style="left:891px;top:268px;width:246px;height:34px;line-height:32px;color:#111">32</div><div class="abs" style="left:1526px;top:1px;width:9px;height:324px;background:#f4f4f4;border-radius:5px 5px 0 0"></div><div class="abs" style="left:1526px;top:193px;width:9px;height:131px;background:#bcc6d8;border-radius:5px"></div></div></div>
<div id="foot"><div class="ok">确定</div><div class="no">取消</div></div>
</div>
<svg class="abs" style="left:0;top:0;pointer-events:none" width="1860" height="885" viewBox="0 0 1860 885"><path d="M448.700 130.500 L455.800 145.700 L450.700 143.400 L418.800 384 L418.200 384 L443.900 141.800 L439 143.400 Z" fill="#ff1e12"/><rect x="1231.0" y="661.0" width="11.0" height="9.3" fill="#ececec"/><rect x="1241.7" y="661.0" width="11.0" height="9.3" fill="#e3e4e4"/><rect x="1252.3" y="661.0" width="11.0" height="9.3" fill="#d9dbdb"/><rect x="1263.0" y="661.0" width="11.0" height="9.3" fill="#ededed"/><rect x="1273.7" y="661.0" width="11.0" height="9.3" fill="#e6e6e6"/><rect x="1284.3" y="661.0" width="11.0" height="9.3" fill="#f0f0f0"/><rect x="1231.0" y="670.0" width="11.0" height="9.3" fill="#f0f0f0"/><rect x="1241.7" y="670.0" width="11.0" height="9.3" fill="#e2e2e2"/><rect x="1252.3" y="670.0" width="11.0" height="9.3" fill="#d6d8d8"/><rect x="1263.0" y="670.0" width="11.0" height="9.3" fill="#efefef"/><rect x="1273.7" y="670.0" width="11.0" height="9.3" fill="#e4e4e4"/><rect x="1284.3" y="670.0" width="11.0" height="9.3" fill="#f2f2f2"/><rect x="1230.0" y="702.0" width="10.3" height="7.8" fill="#e6e6e6"/><rect x="1240.0" y="702.0" width="10.3" height="7.8" fill="#dcdce0"/><rect x="1250.0" y="702.0" width="10.3" height="7.8" fill="#e4e4e4"/><rect x="1230.0" y="709.5" width="10.3" height="7.8" fill="#dedede"/><rect x="1240.0" y="709.5" width="10.3" height="7.8" fill="#cfcfd4"/><rect x="1250.0" y="709.5" width="10.3" height="7.8" fill="#dadada"/><rect x="1234.0" y="736.0" width="12.8" height="9.3" fill="#f2f2f2"/><rect x="1246.5" y="736.0" width="12.8" height="9.3" fill="#ededed"/><rect x="1259.0" y="736.0" width="12.8" height="9.3" fill="#e8eaea"/><rect x="1271.5" y="736.0" width="12.8" height="9.3" fill="#e9ebeb"/><rect x="1234.0" y="745.0" width="12.8" height="9.3" fill="#c9c9c9"/><rect x="1246.5" y="745.0" width="12.8" height="9.3" fill="#c6c6c6"/><rect x="1259.0" y="745.0" width="12.8" height="9.3" fill="#cbc6c6"/><rect x="1271.5" y="745.0" width="12.8" height="9.3" fill="#d9dcdc"/><rect x="1235.0" y="775.0" width="11.9" height="10.3" fill="#f4f4f4"/><rect x="1246.6" y="775.0" width="11.9" height="10.3" fill="#f2f2f2"/><rect x="1258.3" y="775.0" width="11.9" height="10.3" fill="#f0f0f0"/><rect x="1269.9" y="775.0" width="11.9" height="10.3" fill="#eeeeee"/><rect x="1281.5" y="775.0" width="11.9" height="10.3" fill="#efefef"/><rect x="1293.2" y="775.0" width="11.9" height="10.3" fill="#f2f2f2"/><rect x="1304.8" y="775.0" width="11.9" height="10.3" fill="#f4f4f4"/><rect x="1316.5" y="775.0" width="11.9" height="10.3" fill="#f0f0f0"/><rect x="1328.1" y="775.0" width="11.9" height="10.3" fill="#ececec"/><rect x="1339.7" y="775.0" width="11.9" height="10.3" fill="#e6e8ea"/><rect x="1351.4" y="775.0" width="11.9" height="10.3" fill="#f4f4f4"/><rect x="1235.0" y="785.0" width="11.9" height="10.3" fill="#d8d6d6"/><rect x="1246.6" y="785.0" width="11.9" height="10.3" fill="#cfcfcf"/><rect x="1258.3" y="785.0" width="11.9" height="10.3" fill="#cacaca"/><rect x="1269.9" y="785.0" width="11.9" height="10.3" fill="#c4c8c8"/><rect x="1281.5" y="785.0" width="11.9" height="10.3" fill="#ccc4c4"/><rect x="1293.2" y="785.0" width="11.9" height="10.3" fill="#bcc2c6"/><rect x="1304.8" y="785.0" width="11.9" height="10.3" fill="#e2e2e2"/><rect x="1316.5" y="785.0" width="11.9" height="10.3" fill="#d0d0d0"/><rect x="1328.1" y="785.0" width="11.9" height="10.3" fill="#cac8c8"/><rect x="1339.7" y="785.0" width="11.9" height="10.3" fill="#d4d4d8"/><rect x="1351.4" y="785.0" width="11.9" height="10.3" fill="#dfe3ee"/></svg>
</div>
</body>
</html>
